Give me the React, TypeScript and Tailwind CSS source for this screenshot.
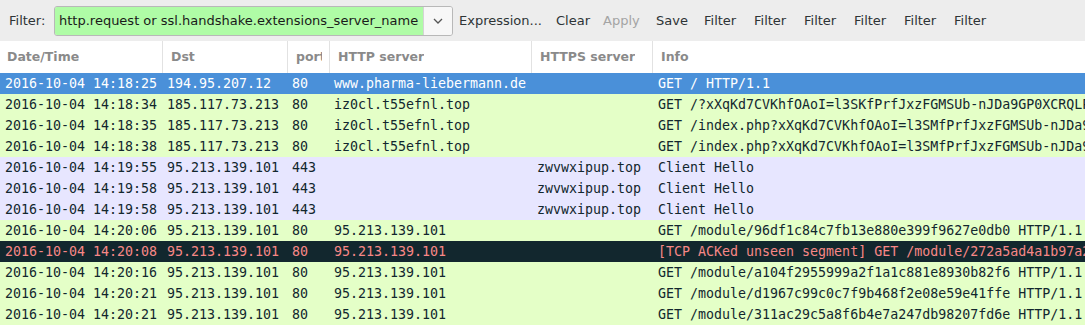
import React from 'react';

type Row = {
  time: string;
  dst: string;
  port: string;
  http: string;
  https: string;
  info: string;
  kind: 'sel' | 'http' | 'tls' | 'bad';
};

const rows: Row[] = [
  { time: '2016-10-04 14:18:25', dst: '194.95.207.12', port: '80', http: 'www.pharma-liebermann.de', https: '', info: 'GET / HTTP/1.1', kind: 'sel' },
  { time: '2016-10-04 14:18:34', dst: '185.117.73.213', port: '80', http: 'iz0cl.t55efnl.top', https: '', info: 'GET /?xXqKd7CVKhfOAoI=l3SKfPrfJxzFGMSUb-nJDa9GP0XCRQLPh0SGc', kind: 'http' },
  { time: '2016-10-04 14:18:35', dst: '185.117.73.213', port: '80', http: 'iz0cl.t55efnl.top', https: '', info: 'GET /index.php?xXqKd7CVKhfOAoI=l3SMfPrfJxzFGMSUb-nJDa9GP0XCRQ', kind: 'http' },
  { time: '2016-10-04 14:18:38', dst: '185.117.73.213', port: '80', http: 'iz0cl.t55efnl.top', https: '', info: 'GET /index.php?xXqKd7CVKhfOAoI=l3SMfPrfJxzFGMSUb-nJDa9GP0XCRQ', kind: 'http' },
  { time: '2016-10-04 14:19:55', dst: '95.213.139.101', port: '443', http: '', https: 'zwvwxipup.top', info: 'Client Hello', kind: 'tls' },
  { time: '2016-10-04 14:19:58', dst: '95.213.139.101', port: '443', http: '', https: 'zwvwxipup.top', info: 'Client Hello', kind: 'tls' },
  { time: '2016-10-04 14:19:58', dst: '95.213.139.101', port: '443', http: '', https: 'zwvwxipup.top', info: 'Client Hello', kind: 'tls' },
  { time: '2016-10-04 14:20:06', dst: '95.213.139.101', port: '80', http: '95.213.139.101', https: '', info: 'GET /module/96df1c84c7fb13e880e399f9627e0db0 HTTP/1.1', kind: 'http' },
  { time: '2016-10-04 14:20:08', dst: '95.213.139.101', port: '80', http: '95.213.139.101', https: '', info: '[TCP ACKed unseen segment] GET /module/272a5ad4a1b97a2e0c1f HTTP/1.1', kind: 'bad' },
  { time: '2016-10-04 14:20:16', dst: '95.213.139.101', port: '80', http: '95.213.139.101', https: '', info: 'GET /module/a104f2955999a2f1a1c881e8930b82f6 HTTP/1.1', kind: 'http' },
  { time: '2016-10-04 14:20:21', dst: '95.213.139.101', port: '80', http: '95.213.139.101', https: '', info: 'GET /module/d1967c99c0c7f9b468f2e08e59e41ffe HTTP/1.1', kind: 'http' },
  { time: '2016-10-04 14:20:21', dst: '95.213.139.101', port: '80', http: '95.213.139.101', https: '', info: 'GET /module/311ac29c5a8f6b4e7a247db98207fd6e HTTP/1.1', kind: 'http' },
];

const rowStyle: Record<Row['kind'], string> = {
  sel: 'bg-[#4a90d9] text-white',
  http: 'bg-[#e4ffc7] text-[#12272e]',
  tls: 'bg-[#e7e6ff] text-[#12272e]',
  bad: 'bg-[#12272e] text-[#f78787]',
};

const grid = 'grid grid-cols-[162px_125px_42px_202px_121px_1fr]';

const tools = [
  { label: 'Expression...', w: 'w-[97px]' },
  { label: 'Clear', w: 'w-[47px]' },
  { label: 'Apply', w: 'w-[53px]', off: true },
  { label: 'Save', w: 'w-[48px]' },
  { label: 'Filter', w: 'w-[50px]' },
  { label: 'Filter', w: 'w-[50px]' },
  { label: 'Filter', w: 'w-[50px]' },
  { label: 'Filter', w: 'w-[50px]' },
  { label: 'Filter', w: 'w-[50px]' },
  { label: 'Filter', w: 'w-[50px]' },
];

const headers = ['Date/Time', 'Dst', 'port', 'HTTP server', 'HTTPS server', 'Info'];

export default function App() {
  return (
    <div className="w-[1085px] h-[325px] overflow-hidden bg-white font-['DejaVu_Sans',sans-serif]">
      {/* filter toolbar */}
      <div className="flex items-center h-[41px] bg-[#ededed] pl-[9px] text-[13px] text-[#2e3436]">
        <span className="w-[45px]">Filter:</span>
        <div className="flex w-[399px] h-[30px] border border-[#b8b8b8] rounded-[3px] overflow-hidden">
          <div className="flex-1 flex items-center bg-[#affca6] pl-[4px] whitespace-nowrap overflow-hidden text-[#1a1a1a]">
            http.request or ssl.handshake.extensions_server_name
          </div>
          <div className="w-[29px] flex items-center justify-center bg-[#f7f7f7] border-l border-[#d4d4d4]">
            <svg width="10" height="6" viewBox="0 0 10 6">
              <path d="M1 1 L5 5 L9 1" fill="none" stroke="#555" strokeWidth="1.3" />
            </svg>
          </div>
        </div>
        <div className="flex ml-[6px]">
          {tools.map((t, i) => (
            <span key={i} className={`${t.w} whitespace-nowrap ${t.off ? 'text-[#a4a4a4]' : ''}`}>
              {t.label}
            </span>
          ))}
        </div>
      </div>

      {/* column header */}
      <div className={`${grid} h-[32px] text-[12.5px] font-bold text-[#8a8a8a]`}>
        {headers.map((h, i) => (
          <div
            key={h}
            className={`flex items-center whitespace-nowrap overflow-hidden pr-[7px] ${i === 0 ? 'pl-[7px]' : 'pl-[8px] border-l border-[#e2e2e2]'}`}
          >
            <span className="overflow-hidden">{h}</span>
          </div>
        ))}
      </div>

      {/* packet list */}
      <div className="font-['DejaVu_Sans_Mono',monospace] text-[13.3px]">
        {rows.map((r, i) => (
          <div key={i} className={`${grid} h-[21px] leading-[21px] ${rowStyle[r.kind]}`}>
            <div className="pl-[5px] whitespace-nowrap overflow-hidden">{r.time}</div>
            <div className="pl-[5px] whitespace-nowrap overflow-hidden">{r.dst}</div>
            <div className="pl-[5px] whitespace-nowrap overflow-hidden">{r.port}</div>
            <div className="pl-[5px] whitespace-nowrap overflow-hidden">{r.http}</div>
            <div className="pl-[6px] whitespace-nowrap overflow-hidden">{r.https}</div>
            <div className="pl-[6px] whitespace-nowrap overflow-hidden">{r.info}</div>
          </div>
        ))}
      </div>
    </div>
  );
}
